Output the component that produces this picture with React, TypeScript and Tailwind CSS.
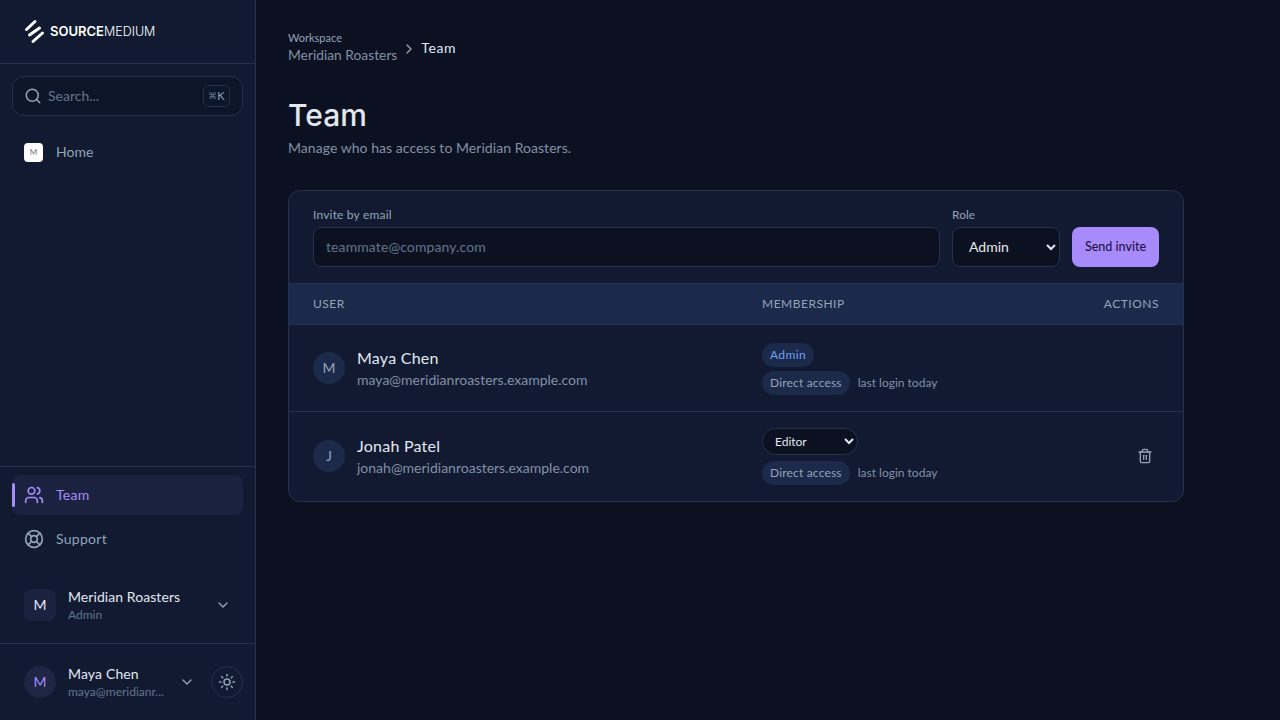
import { ChevronDown, ChevronRight, LifeBuoy, Search, Sun, Trash2, Users } from "lucide-react";

function DirectAccess() {
  return (
    <div className="flex items-center gap-2">
      <span className="h-6 px-2 rounded-full bg-[#1b2a4a] text-[#94a3b8] text-xs tracking-[0.015em] leading-6">
        Direct access
      </span>
      <span className="text-xs text-[#8290a6]">last login today</span>
    </div>
  );
}

function UserCell({ initial, name, email }: { initial: string; name: string; email: string }) {
  return (
    <div className="flex items-center gap-3 w-[449px]">
      <div className="w-8 h-8 rounded-full bg-[#1b2a4a] text-[#94a3b8] text-sm flex items-center justify-center">
        {initial}
      </div>
      <div>
        <div className="text-base tracking-[0.015em] leading-6 text-[#e2e8f0]">{name}</div>
        <div className="text-sm leading-5 text-[#8290a6]">{email}</div>
      </div>
    </div>
  );
}

export default function App() {
  return (
    <div className="flex h-screen w-full overflow-hidden bg-[#0b1120] text-[#e2e8f0] font-['Lato',sans-serif]">
      <aside className="w-64 shrink-0 flex flex-col bg-[#111a31] border-r border-[#27304f]">
        <div className="h-16 shrink-0 px-6 flex items-center gap-1 border-b border-[#27304f]">
          <svg width="22" height="26" viewBox="0 0 22 26" className="shrink-0">
            <g stroke="#ffffff" strokeWidth="3" strokeLinecap="round">
              <path d="M2.5 10.5 11 2.5" />
              <path d="M5.5 16 15.5 9" />
              <path d="M9 22.5 18.5 14" />
            </g>
          </svg>
          <div className="text-[13px] font-['Inter',sans-serif] text-white">
            <span className="font-semibold">SOURCE</span>
            <span className="font-light text-[12.5px]">MEDIUM</span>
          </div>
        </div>

        <div className="px-3 pt-3">
          <div className="h-10 rounded-xl bg-[#0d152a] border border-[#27304f] flex items-center pl-[11px] pr-3 gap-[6px]">
            <Search size={18} className="text-[#94a3b8]" />
            <span className="flex-1 text-sm text-[#64748b]">Search...</span>
            <span className="w-[27px] h-[22px] rounded-md border border-[#27304f] text-[11px] text-[#94a3b8] flex items-center justify-center">
              <span className="text-[9px] text-[#64748b]">⌘</span>K
            </span>
          </div>
        </div>

        <div className="px-6 mt-6 h-6 flex items-center gap-3 shrink-0">
          <div className="w-[19px] h-[19px] rounded bg-white text-[#6b7280] text-[8px] flex items-center justify-center">
            M
          </div>
          <span className="text-sm ml-[1px] text-[#94a3b8]">Home</span>
        </div>

        <div className="flex-1" />

        <div className="border-t border-[#27304f] pt-2 px-3">
          <div className="relative h-10 rounded-lg bg-[#1a2240] flex items-center pl-3 gap-3 text-[#a78bfa]">
            <span className="absolute left-0 top-2 w-[3px] h-6 rounded-sm bg-[#a78bfa]" />
            <Users size={20} />
            <span className="text-sm tracking-[0.02em]">Team</span>
          </div>
          <div className="mt-1 h-10 flex items-center pl-3 gap-3 text-[#94a3b8]">
            <LifeBuoy size={20} />
            <span className="text-sm tracking-[0.02em]">Support</span>
          </div>
        </div>

        <div className="mt-[10px] h-[75px] pb-[3px] px-6 flex items-center gap-3 border-b border-[#27304f] shrink-0">
          <div className="w-8 h-8 rounded-lg bg-[#1a2240] text-sm flex items-center justify-center">M</div>
          <div className="flex-1">
            <div className="text-sm tracking-[0.005em] leading-5">Meridian Roasters</div>
            <div className="text-xs leading-4 text-[#64748b]">Admin</div>
          </div>
          <ChevronDown size={16} className="text-[#94a3b8]" />
        </div>

        <div className="h-[76px] shrink-0 pl-6 pr-3 flex items-center">
          <div className="w-8 h-8 rounded-full bg-[#1f2545] text-[#a78bfa] text-sm flex items-center justify-center">
            M
          </div>
          <div className="ml-3 w-[111px]">
            <div className="text-sm tracking-[0.01em] leading-5">Maya Chen</div>
            <div className="text-xs leading-4 text-[#64748b]">maya@meridianr...</div>
          </div>
          <ChevronDown size={16} className="text-[#94a3b8]" />
          <div className="ml-auto w-8 h-8 rounded-full border border-[#27304f] flex items-center justify-center text-[#94a3b8]">
            <Sun size={18} />
          </div>
        </div>
      </aside>

      <main className="flex-1 px-8 pt-8">
        <div className="flex items-center gap-1">
          <div>
            <div className="text-[11px] leading-3 text-[#94a3b8]">Workspace</div>
            <div className="text-[13.8px] leading-5 mt-[1px] text-[#8290a6]">Meridian Roasters</div>
          </div>
          <ChevronRight size={16} className="text-[#94a3b8]" />
          <span className="text-sm tracking-[0.04em] mb-[2px] text-[#e2e8f0]">Team</span>
        </div>

        <h1 className="mt-[32px] text-[30px] leading-9 font-medium font-['Inter',sans-serif] text-[#e2e8f0]">Team</h1>
        <p className="mt-[5px] text-sm tracking-[0.0035em] leading-5 text-[#8290a6]">
          Manage who has access to Meridian Roasters.
        </p>

        <section className="mt-8 w-[896px] rounded-xl bg-[#111a31] border border-[#27304f] overflow-hidden">
          <div className="px-6 pt-4 pb-4 flex items-end gap-3 h-[92px]">
            <div className="flex-1">
              <label className="block text-xs tracking-[0.015em] leading-4 mb-1 text-[#94a3b8]">Invite by email</label>
              <input
                placeholder="teammate@company.com"
                className="w-full h-10 px-3 pb-[2px] rounded-lg bg-[#0b1120] border border-[#27304f] text-sm tracking-[0.007em] placeholder:text-[#64748b] outline-none"
              />
            </div>
            <div>
              <label className="block text-xs leading-4 mb-1 text-[#94a3b8]">Role</label>
              <select
                defaultValue="Admin"
                className="w-[108px] h-10 pl-3 pb-[2px] rounded-lg bg-[#0b1120] border border-[#27304f] text-sm text-[#e2e8f0]"
              >
                <option>Admin</option>
                <option>Editor</option>
              </select>
            </div>
            <button className="w-[87px] h-10 pt-[1px] rounded-lg bg-[#a78bfa] text-[#1e1245] text-[12.5px] font-medium">
              Send invite
            </button>
          </div>

          <div className="h-[42px] px-6 flex items-center bg-[#1b2a4a] border-y border-[#27304f] text-xs tracking-[0.042em] text-[#94a3b8]">
            <span className="w-[449px]">USER</span>
            <span className="flex-1">MEMBERSHIP</span>
            <span>ACTIONS</span>
          </div>

          <div className="h-[87px] px-6 flex items-center border-b border-[#27304f]">
            <UserCell initial="M" name="Maya Chen" email="maya@meridianroasters.example.com" />
            <div className="flex flex-col items-start gap-1 mt-[2px]">
              <span className="h-6 px-2 rounded-full bg-[#1b2a4a] text-[#6ea0f0] text-xs tracking-[0.03em] leading-6">
                Admin
              </span>
              <DirectAccess />
            </div>
          </div>

          <div className="h-[89px] px-6 flex items-center">
            <div className="mb-[2px]">
              <UserCell initial="J" name="Jonah Patel" email="jonah@meridianroasters.example.com" />
            </div>
            <div className="flex flex-col items-start gap-[6px]">
              <select
                defaultValue="Editor"
                className="w-24 h-[27px] pl-2 rounded-full bg-[#0b1120] border border-[#27304f] text-xs text-[#e2e8f0]"
              >
                <option>Admin</option>
                <option>Editor</option>
              </select>
              <DirectAccess />
            </div>
            <Trash2 size={16} className="ml-auto mr-[6px] mb-[2px] text-[#94a3b8]" />
          </div>
        </section>
      </main>
    </div>
  );
}
